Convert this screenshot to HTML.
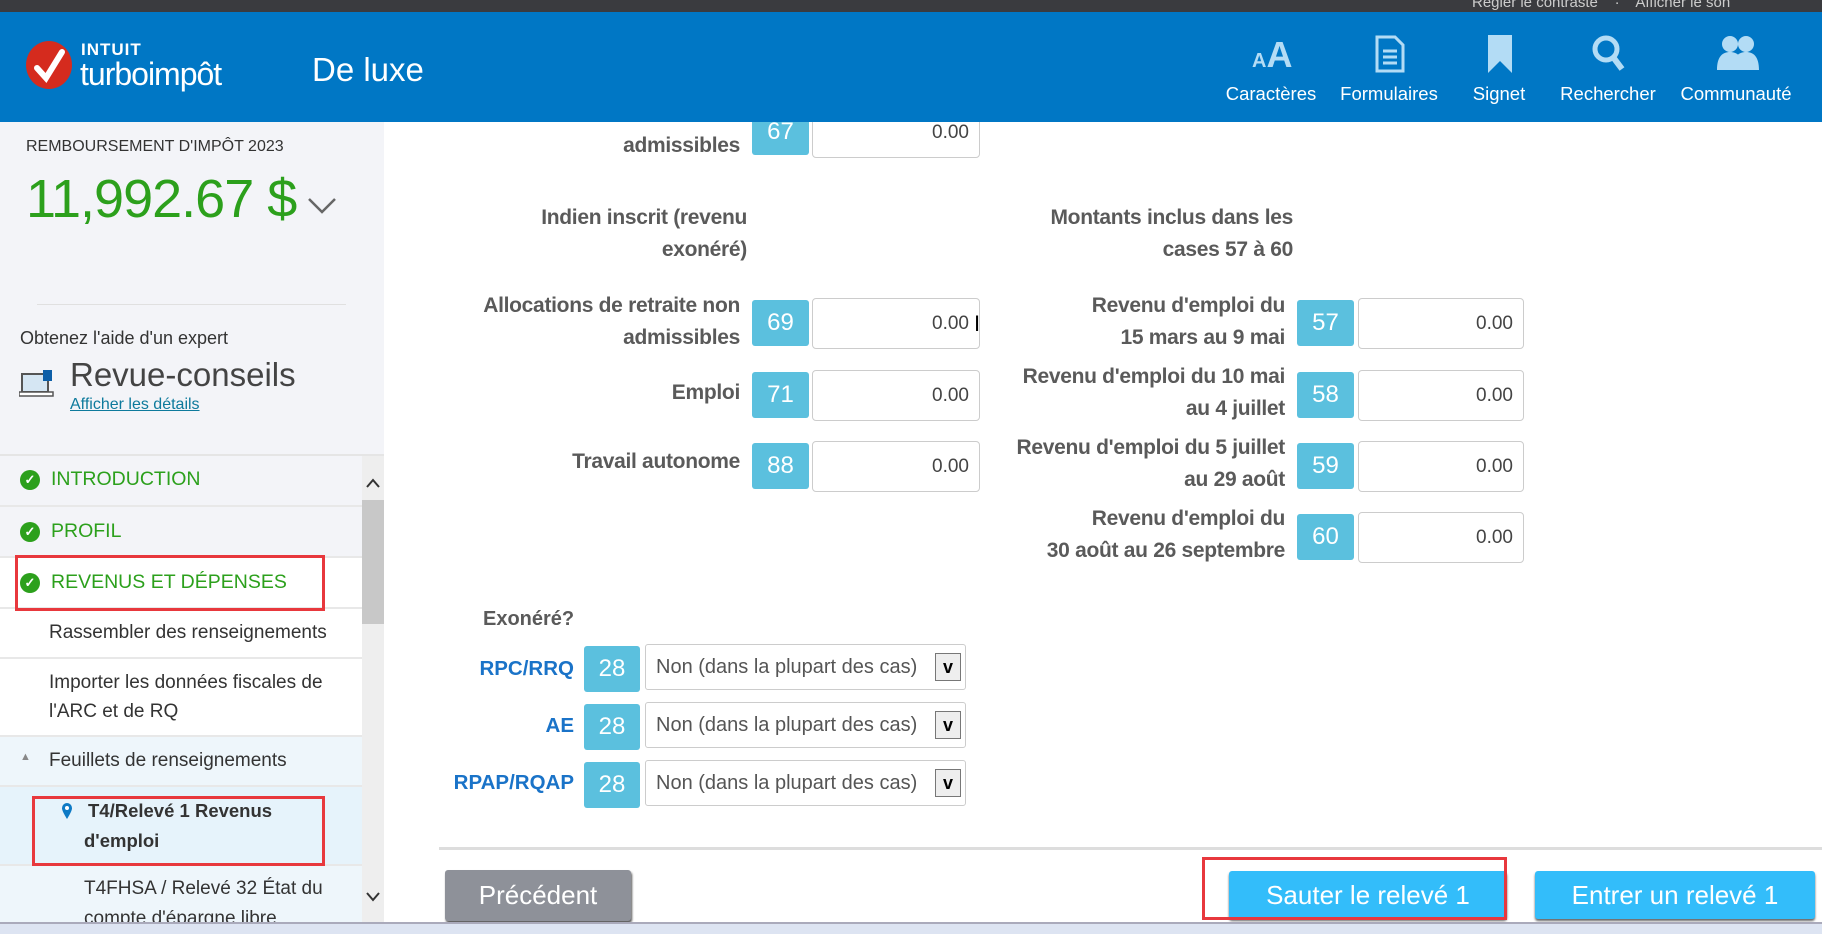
<!DOCTYPE html>
<html><head><meta charset="utf-8"><style>
*{margin:0;padding:0;box-sizing:border-box}
body{width:1822px;height:934px;overflow:hidden;position:relative;background:#fff;font-family:"Liberation Sans",sans-serif}
.a{position:absolute;white-space:nowrap}
.lbl{position:absolute;text-align:right;color:#5a5a5a;font-weight:bold;font-size:21px;line-height:32px;letter-spacing:-0.3px}
.b{position:absolute;width:57px;height:46px;background:#5bc0de;color:#fff;font-size:24px;text-align:center;line-height:46px;border-radius:3px}
.in{position:absolute;width:168px;height:51px;border:1px solid #ccc;border-radius:4px;background:#fff;text-align:right;padding-right:10px;line-height:49px;font-size:19px;color:#444}
.sel{position:absolute;left:645px;width:321px;height:46px;border:1px solid #ccc;border-radius:3px;font-size:20px;color:#555;line-height:44px;padding-left:10px}
.sel i{position:absolute;right:4px;top:8px;width:26px;height:28px;border:1px solid #777;background:#eee;font-style:normal;text-align:center;line-height:26px;font-size:18px;color:#000;font-weight:bold}
.blu{position:absolute;text-align:right;color:#1a73c8;font-size:20.5px;font-weight:bold}
.nav{position:absolute;left:0;width:362px;border-bottom:2px solid #e8e8e8}
.nt{position:absolute;left:49px;font-size:19px;color:#333;line-height:28px}
.ck{position:absolute;left:20px;width:20px;height:20px;border-radius:50%;background:#2ca01c;color:#fff;font-size:13px;text-align:center;line-height:20px;font-weight:bold}
.g{position:absolute;left:51px;color:#2ca01c;font-size:19.5px}
.ic{position:absolute;color:#fff;font-size:18.5px;text-align:center;width:130px}
</style></head><body>
<div class="a" style="left:0;top:0;width:1822px;height:12px;background:#3a3b3f"></div>
<div class="a" style="left:1472px;top:-6px;color:#ccc;font-size:15px">Régler le contraste &nbsp;&nbsp; · &nbsp;&nbsp; Afficher le son</div>
<div class="a" style="left:0;top:12px;width:1822px;height:110px;background:#0077c5"></div>
<div class="a" style="left:26px;top:41px;width:46px;height:48px;border-radius:50%;background:#d52b1e"></div>
<svg class="a" style="left:30px;top:46px" width="40" height="40"><path d="M7 22 L16 32 L32 6" stroke="#fff" stroke-width="6" fill="none" stroke-linecap="round"/></svg>
<div class="a" style="left:81px;top:40px;color:#fff;font-weight:bold;font-size:17px;letter-spacing:1px">INTUIT</div>
<div class="a" style="left:80px;top:56px;color:#fff;font-size:32px;letter-spacing:-1px">turboimpôt</div>
<div class="a" style="left:312px;top:51px;color:#fff;font-size:33px">De luxe</div>
<div class="a" style="left:1252px;top:34px;color:#b3dcf5;font-size:36px;font-weight:bold"><span style="font-size:20px">A</span>A</div>
<svg class="a" style="left:1374px;top:35px" width="32" height="38"><path d="M3 2h18l8 8v26H3z" fill="none" stroke="#b3dcf5" stroke-width="3"/><path d="M9 16h14M9 22h14M9 28h14" stroke="#b3dcf5" stroke-width="3"/></svg>
<svg class="a" style="left:1486px;top:35px" width="28" height="38"><path d="M2 0h24v38l-12-12-12 12z" fill="#b3dcf5"/></svg>
<svg class="a" style="left:1591px;top:34px" width="36" height="40"><circle cx="15" cy="15" r="11" fill="none" stroke="#b3dcf5" stroke-width="5"/><path d="M22 23l9 12" stroke="#b3dcf5" stroke-width="6"/></svg>
<svg class="a" style="left:1716px;top:34px" width="44" height="36"><circle cx="14" cy="10" r="8" fill="#b3dcf5"/><circle cx="30" cy="10" r="8" fill="#b3dcf5"/><path d="M1 36c0-14 6-18 13-18s13 4 13 18z M17 36c0-14 6-18 13-18s13 4 13 18z" fill="#b3dcf5"/></svg>
<div class="ic" style="left:1206px;top:83px">Caractères</div>
<div class="ic" style="left:1324px;top:83px">Formulaires</div>
<div class="ic" style="left:1434px;top:83px">Signet</div>
<div class="ic" style="left:1543px;top:83px">Rechercher</div>
<div class="ic" style="left:1671px;top:83px">Communauté</div>

<div class="a" style="left:0;top:122px;width:384px;height:800px;background:#f3f4f8"></div>
<div class="a" style="left:26px;top:138px;font-size:16px;color:#333">REMBOURSEMENT D'IMPÔT 2023</div>
<div class="a" style="left:26px;top:168px;font-size:54px;color:#2ca01c;letter-spacing:-1px">11,992.67 $</div>
<svg class="a" style="left:307px;top:196px" width="30" height="20"><path d="M2 3l13 13L28 3" stroke="#666" stroke-width="2.5" fill="none"/></svg>
<div class="a" style="left:37px;top:304px;width:309px;height:1px;background:#e0e0e0"></div>
<div class="a" style="left:20px;top:328px;font-size:18px;color:#333">Obtenez l'aide d'un expert</div>
<svg class="a" style="left:19px;top:368px" width="36" height="32"><rect x="3" y="6" width="26" height="18" fill="#d5e6f3" stroke="#555" stroke-width="2"/><rect x="0" y="24" width="34" height="4" fill="#fff" stroke="#555" stroke-width="1.5"/><rect x="24" y="2" width="9" height="11" fill="#0d5fa8"/></svg>
<div class="a" style="left:70px;top:356px;font-size:33px;color:#444">Revue-conseils</div>
<div class="a" style="left:70px;top:396px;font-size:16px;color:#0d7a9c;text-decoration:underline">Afficher les détails</div>
<div class="a" style="left:0;top:454px;width:384px;height:2px;background:#e5e5e5"></div>

<div class="nav" style="top:456px;height:51px"><div class="ck" style="top:14px">✓</div><div class="g" style="top:12px">INTRODUCTION</div></div>
<div class="nav" style="top:507px;height:51px"><div class="ck" style="top:15px">✓</div><div class="g" style="top:13px">PROFIL</div></div>
<div class="nav" style="top:558px;height:51px;background:#fff"><div class="ck" style="top:15px">✓</div><div class="g" style="top:13px">REVENUS ET DÉPENSES</div></div>
<div class="nav" style="top:609px;height:50px;background:#fff"><div class="nt" style="top:10px">Rassembler des renseignements</div></div>
<div class="nav" style="top:659px;height:78px;background:#fff"><div class="nt" style="top:10px">Importer les données fiscales de</div><div class="nt" style="top:39px">l'ARC et de RQ</div></div>
<div class="nav" style="top:737px;height:50px;background:#eef6fb"><div class="a" style="left:20px;top:14px;font-size:11px;color:#888">▲</div><div class="nt" style="top:10px">Feuillets de renseignements</div></div>
<div class="nav" style="top:787px;height:79px;background:#e6f3fb"><svg class="a" style="left:61px;top:15px" width="12" height="18"><path d="M6 17C1 9 1 7 1 6a5 5 0 0110 0c0 1 0 3-5 11z" fill="#0d7ac5"/><circle cx="6" cy="6" r="2" fill="#fff"/></svg><div class="nt" style="left:88px;top:10px;font-weight:bold;font-size:18.5px">T4/Relevé 1 Revenus</div><div class="nt" style="left:84px;top:40px;font-weight:bold;font-size:18.5px">d'emploi</div></div>
<div class="nav" style="top:866px;height:56px;background:#eef6fb;border:none"><div class="nt" style="left:84px;top:9px">T4FHSA / Relevé 32 État du</div><div class="nt" style="left:84px;top:39px">compte d'épargne libre</div></div>
<div class="a" style="left:362px;top:456px;width:22px;height:466px;background:#eeeeee"></div>
<div class="a" style="left:362px;top:500px;width:22px;height:124px;background:#c8c8c8"></div>
<svg class="a" style="left:365px;top:476px" width="16" height="14"><path d="M2 11L8 4l6 7" stroke="#333" stroke-width="2" fill="none"/></svg>
<svg class="a" style="left:365px;top:890px" width="16" height="14"><path d="M2 3l6 7 6-7" stroke="#333" stroke-width="2" fill="none"/></svg>
<div class="a" style="left:15px;top:555px;width:310px;height:56px;border:3px solid #e8383d"></div>
<div class="a" style="left:32px;top:796px;width:293px;height:70px;border:3px solid #e8383d"></div>

<div class="lbl" style="left:400px;width:340px;top:130px">admissibles</div>
<div class="b" style="left:752px;top:109px">67</div>
<div class="in" style="left:812px;top:107px">0.00</div>
<div class="a" style="left:384px;top:106px;width:1438px;height:16px;background:#0077c5"></div>
<div class="lbl" style="left:400px;width:347px;top:202px">Indien inscrit (revenu<br>exonéré)</div>
<div class="lbl" style="left:900px;width:393px;top:202px">Montants inclus dans les<br>cases 57 à 60</div>

<div class="lbl" style="left:400px;width:340px;top:290px">Allocations de retraite non<br>admissibles</div>
<div class="b" style="left:752px;top:300px">69</div><div class="in" style="left:812px;top:298px">0.00</div>
<div class="lbl" style="left:400px;width:340px;top:377px">Emploi</div>
<div class="b" style="left:752px;top:372px">71</div><div class="in" style="left:812px;top:370px">0.00</div>
<div class="lbl" style="left:400px;width:340px;top:446px">Travail autonome</div>
<div class="b" style="left:752px;top:443px">88</div><div class="in" style="left:812px;top:441px">0.00</div>
<div class="a" style="left:974px;top:311px;font-size:22px">I</div>

<div class="lbl" style="left:900px;width:385px;top:290px">Revenu d'emploi du<br>15 mars au 9 mai</div>
<div class="b" style="left:1297px;top:300px">57</div><div class="in" style="left:1358px;top:298px;width:166px">0.00</div>
<div class="lbl" style="left:880px;width:405px;top:361px">Revenu d'emploi du 10 mai<br>au 4 juillet</div>
<div class="b" style="left:1297px;top:372px">58</div><div class="in" style="left:1358px;top:370px;width:166px">0.00</div>
<div class="lbl" style="left:880px;width:405px;top:432px">Revenu d'emploi du 5 juillet<br>au 29 août</div>
<div class="b" style="left:1297px;top:443px">59</div><div class="in" style="left:1358px;top:441px;width:166px">0.00</div>
<div class="lbl" style="left:900px;width:385px;top:503px">Revenu d'emploi du<br>30 août au 26 septembre</div>
<div class="b" style="left:1297px;top:514px">60</div><div class="in" style="left:1358px;top:512px;width:166px">0.00</div>

<div class="a" style="left:483px;top:608px;font-size:20px;font-weight:bold;color:#5a5a5a">Exonéré?</div>
<div class="blu" style="left:400px;width:174px;top:657px">RPC/RRQ</div>
<div class="b" style="left:584px;top:646px;width:56px">28</div><div class="sel" style="top:644px">Non (dans la plupart des cas)<i>v</i></div>
<div class="blu" style="left:400px;width:174px;top:714px">AE</div>
<div class="b" style="left:584px;top:704px;width:56px">28</div><div class="sel" style="top:702px">Non (dans la plupart des cas)<i>v</i></div>
<div class="blu" style="left:400px;width:174px;top:771px">RPAP/RQAP</div>
<div class="b" style="left:584px;top:762px;width:56px">28</div><div class="sel" style="top:760px">Non (dans la plupart des cas)<i>v</i></div>

<div class="a" style="left:439px;top:847px;width:1383px;height:3px;background:#ddd"></div>
<div class="a" style="left:445px;top:870px;width:186px;height:51px;background:#8e9199;border-radius:3px;color:#fff;font-size:26px;text-align:center;line-height:50px;box-shadow:1px 2px 2px #555">Précédent</div>
<div class="a" style="left:1229px;top:871px;width:278px;height:48px;background:#33bdfa;border-radius:3px;color:#fff;font-size:26px;text-align:center;line-height:48px;box-shadow:0 2px 2px #666">Sauter le relevé 1</div>
<div class="a" style="left:1202px;top:857px;width:305px;height:63px;border:3px solid #e8383d"></div>
<div class="a" style="left:1535px;top:871px;width:280px;height:48px;background:#33bdfa;border-radius:3px;color:#fff;font-size:26px;text-align:center;line-height:48px;box-shadow:0 2px 2px #666">Entrer un relevé 1</div>
<div class="a" style="left:0;top:922px;width:1822px;height:12px;background:linear-gradient(#aab 0,#aab 2px,#dde4f2 2px)"></div>
</body></html>
